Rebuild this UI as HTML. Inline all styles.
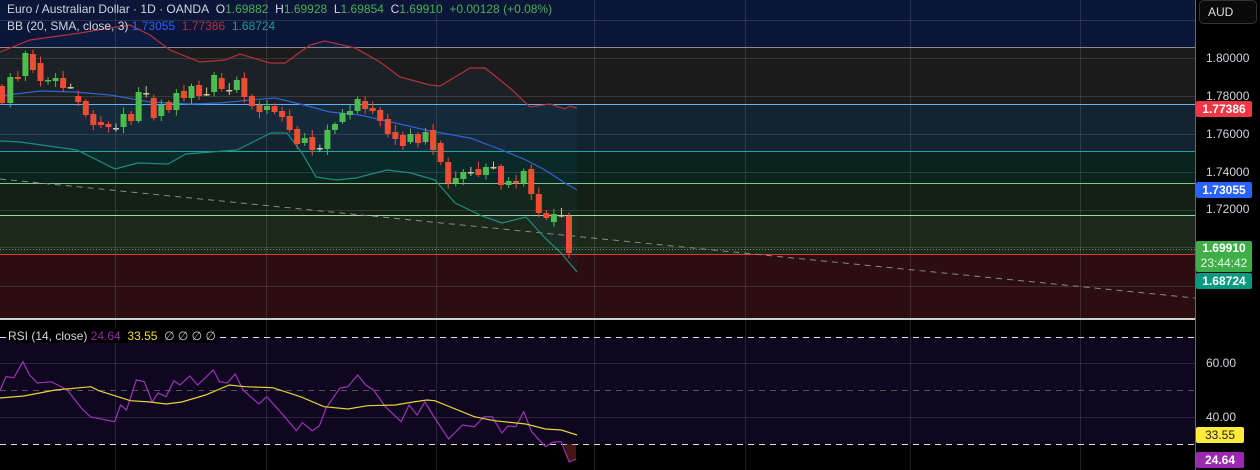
<!DOCTYPE html>
<html><head><meta charset="utf-8">
<style>
html,body{margin:0;padding:0;background:#000;width:1260px;height:470px;overflow:hidden;font-family:"Liberation Sans",sans-serif;}
#wrap{position:relative;width:1260px;height:470px;}
svg{position:absolute;left:0;top:0}
.t{position:absolute;font-size:12px;color:#d1d4dc;white-space:nowrap;line-height:14px}
.tag{position:absolute;left:1196px;width:56px;font-size:12px;font-weight:bold;color:#fff;text-align:center;border-radius:2px;line-height:16px}
.ax{position:absolute;left:1206px;font-size:12px;color:#d1d4dc;line-height:14px}
</style></head><body><div id="wrap">
<svg id="s" width="1260" height="470" xmlns="http://www.w3.org/2000/svg">
<rect x="0" y="0" width="1195" height="47" fill="#0b1638"/>
<rect x="0" y="47" width="1195" height="57" fill="#1b1b1b"/>
<rect x="0" y="104" width="1195" height="47" fill="#132330"/>
<rect x="0" y="151" width="1195" height="32" fill="#0b231f"/>
<rect x="0" y="183" width="1195" height="32" fill="#132114"/>
<rect x="0" y="215" width="1195" height="39" fill="#1b291b"/>
<rect x="0" y="254" width="1195" height="64" fill="#2c0e10"/>
<rect x="0" y="320" width="1195" height="150" fill="#000"/>
<rect x="0" y="337" width="1195" height="107" fill="#0f0620"/>
<g id="grid" stroke="rgba(255,255,255,0.12)" stroke-width="1"></g>
<line x1="0" y1="47.5" x2="1195" y2="47.5" stroke="#8a8a8a"/>
<line x1="0" y1="104.5" x2="1195" y2="104.5" stroke="#64b5f6"/>
<line x1="0" y1="151.5" x2="1195" y2="151.5" stroke="#26a69a"/>
<line x1="0" y1="183.5" x2="1195" y2="183.5" stroke="#81c784"/>
<line x1="0" y1="215.5" x2="1195" y2="215.5" stroke="#a5d6a7"/>
<line x1="0" y1="249.5" x2="1195" y2="249.5" stroke="#4caf50" stroke-dasharray="1 2"/>
<line x1="0" y1="254.5" x2="1195" y2="254.5" stroke="#e53935"/>
<line x1="0" y1="179" x2="1195" y2="298" stroke="#888" stroke-dasharray="6 5"/>
<rect x="0" y="318" width="1260" height="2" fill="#cfcfcf"/>
<line x1="0" y1="337.5" x2="1195" y2="337.5" stroke="#ddd" stroke-dasharray="6 5"/>
<line x1="0" y1="444.5" x2="1195" y2="444.5" stroke="#ddd" stroke-dasharray="6 5"/>
<line x1="0" y1="390.5" x2="1195" y2="390.5" stroke="#555" stroke-dasharray="6 5"/>
<g id="bb"></g>
<g id="cd"></g>
<g id="rsi"></g>
<rect x="1195" y="0" width="65" height="470" fill="#000"/>
<line x1="1195.5" y1="0" x2="1195.5" y2="470" stroke="#666"/>
<rect x="1199.5" y="0.5" width="57" height="23" rx="4" fill="#0a0a0a" stroke="#333"/>
</svg>
<div class="t" style="left:7px;top:2px">Euro / Australian Dollar · 1D · OANDA&nbsp; O<span style="color:#4caf50">1.69882</span>&nbsp; H<span style="color:#4caf50">1.69928</span>&nbsp; L<span style="color:#4caf50">1.69854</span>&nbsp; C<span style="color:#4caf50">1.69910</span>&nbsp; <span style="color:#4caf50">+0.00128 (+0.08%)</span></div>
<div class="t" style="left:7px;top:19px">BB (20, SMA, close, 3) <span style="color:#2962ff">1.73055</span>&nbsp; <span style="color:#b2323f">1.77386</span>&nbsp; <span style="color:#1f9c8c">1.68724</span></div>
<div class="t" style="left:7px;top:329px;background:#000;padding:0 1px">RSI (14, close) <span style="color:#9c27b0">24.64</span>&nbsp; <span style="color:#f5dd3a">33.55</span>&nbsp; <span style="color:#ccc">∅ ∅ ∅ ∅</span></div>
<div class="ax" style="left:1208px;top:5px;color:#ddd">AUD</div>
<div class="ax" style="top:51px">1.80000</div>
<div class="ax" style="top:89px">1.78000</div>
<div class="ax" style="top:127px">1.76000</div>
<div class="ax" style="top:165px">1.74000</div>
<div class="ax" style="top:202px">1.72000</div>
<div class="ax" style="top:356px">60.00</div>
<div class="ax" style="top:410px">40.00</div>
<div class="tag" style="top:101px;background:#f23645">1.77386</div>
<div class="tag" style="top:182px;background:#2962ff">1.73055</div>
<div class="tag" style="top:241px;background:#3fae48;line-height:15px;height:31px">1.69910<br><span style="font-weight:normal;color:#e8f5e9">23:44:42</span></div>
<div class="tag" style="top:273px;background:#089981">1.68724</div>
<div class="tag" style="top:427px;background:#ffeb3b;color:#222;width:48px;font-weight:normal">33.55</div>
<div class="tag" style="top:452px;background:#9c27b0;width:48px">24.64</div>
</div>
<script>
var NS="http://www.w3.org/2000/svg";
function el(p,t,a){var e=document.createElementNS(NS,t);for(var k in a)e.setAttribute(k,a[k]);document.getElementById(p).appendChild(e);return e;}
[115,266,436,594,745,910,1080].forEach(function(x){el("grid","line",{x1:x+.5,y1:0,x2:x+.5,y2:470});});
[20,58,96,134,172,210,247,286,363,417].forEach(function(y){el("grid","line",{x1:0,y1:y+.5,x2:1195,y2:y+.5});});
function pts(a){return a.map(function(p){return p[0]+","+p[1]}).join(" ");}
var up=[[0,52],[30,40],[80,33],[110,28],[130,25],[150,35],[170,50],[200,62],[225,60],[240,54],[270,63],[285,63],[310,45],[325,41],[355,48],[380,62],[400,77],[430,85],[440,86],[455,77],[470,68],[485,68],[510,88],[530,107],[550,104],[565,109],[570,106],[577,108]];
var mid=[[0,96],[40,91],[75,92],[110,95],[150,102],[190,104],[220,103],[250,100],[275,98],[300,104],[330,112],[360,115],[400,124],[430,131],[470,138],[502,150],[526,160],[545,170],[565,183],[577,190]];
var lo=[[0,141],[20,142],[77,150],[115,169],[138,163],[168,164],[186,154],[237,150],[271,133],[287,133],[302,153],[316,177],[336,180],[356,178],[387,170],[411,173],[435,180],[455,203],[482,216],[502,223],[526,217],[545,238],[561,253],[577,272]];
el("bb","polygon",{points:pts(up)+" "+pts(lo.slice().reverse()),fill:"rgba(33,150,243,0.05)"});
el("bb","polyline",{points:pts(up),fill:"none",stroke:"#b2323f","stroke-width":1.2});
el("bb","polyline",{points:pts(mid),fill:"none",stroke:"#2f63d6","stroke-width":1.2});
el("bb","polyline",{points:pts(lo),fill:"none",stroke:"#1c8c7e","stroke-width":1.2});
var c=[[86,103,'r'],[77,103,'g'],[77,79,'r'],[53,76,'g'],[54,70,'r'],[63,81,'r'],[80,81,'g'],[78,81,'g'],[78,88,'r'],[87,87,'n'],[96,102,'r'],[101,115,'r'],[114,125,'r'],[122,125,'r'],[124,127,'r'],[128,128,'n'],[114,127,'g'],[114,121,'r'],[92,121,'g'],[93,93,'n'],[98,118,'r'],[105,116,'g'],[102,110,'r'],[93,110,'g'],[91,98,'r'],[86,98,'g'],[85,96,'r'],[94,94,'n'],[75,92,'g'],[78,89,'r'],[90,90,'n'],[80,90,'g'],[78,97,'r'],[96,106,'r'],[105,112,'r'],[106,110,'g'],[106,112,'r'],[111,117,'r'],[116,130,'r'],[129,144,'r'],[138,143,'g'],[137,150,'r'],[148,148,'n'],[130,149,'g'],[124,130,'g'],[113,122,'g'],[111,115,'g'],[99,111,'g'],[101,109,'r'],[108,111,'r'],[110,121,'r'],[119,134,'r'],[132,139,'r'],[135,146,'r'],[134,142,'g'],[134,143,'r'],[132,142,'g'],[130,150,'r'],[143,162,'r'],[162,183,'r'],[178,183,'g'],[172,179,'g'],[172,172,'n'],[169,175,'r'],[167,175,'g'],[167,167,'n'],[166,185,'r'],[181,185,'g'],[181,183,'r'],[171,183,'g'],[169,194,'r'],[194,213,'r'],[213,218,'r'],[214,222,'g'],[215,215,'n'],[216,253,'r']];
c.forEach(function(d,i){
 var x=i==0?2:569-7.55*(75-i);var col=d[2]=='r'?'#ee4d34':(d[2]=='g'?'#4cbc4f':'#c8c8a0');
 var w=((i*37)%11)/2+2;
 el("cd","line",{x1:x,y1:d[0]-w,x2:x,y2:d[1]+((i*23)%9)/2+2,stroke:col,"stroke-width":1});
 el("cd","rect",{x:x-3,y:d[0],width:6,height:Math.max(1.5,d[1]-d[0]),fill:col});
});
var rp=[[0,390.7],[15,376.7],[35,377.7],[58,361.7],[75,375],[95,383],[130,381.7],[170,390],[210,410],[230,417],[290,421.7],[305,405],[320,410],[345,380],[365,381.7],[385,402],[400,393],[420,396.7],[440,380.7],[455,385],[480,376],[500,385],[540,370],[555,381.7],[575,383],[595,374],[615,390],[655,404],[675,396.7],[720,416.7],[750,430.7],[765,422.7],[790,430.7],[808,426],[825,408],[860,388],[880,386.7],[905,375],[925,385],[945,390],[975,406.7],[1015,421.7],[1035,405],[1055,415],[1075,402],[1100,418],[1135,439],[1170,425],[1200,426.7],[1225,416.7],[1245,416.7],[1270,433],[1285,426],[1305,426.7],[1325,411.7],[1345,431.7],[1380,446.7],[1400,442],[1420,441.7],[1440,462],[1458,459]].map(function(p){return [p[0]/2.53,p[1]]});
var yp=[[0,398],[60,396],[100,393],[140,390],[230,386.7],[250,390.7],[330,400.7],[380,402],[420,404],[460,402],[520,395],[580,385],[620,386.7],[690,387.7],[760,396.7],[820,406.7],[880,409],[930,405.7],[1000,405],[1045,402],[1080,400],[1100,400.7],[1200,416.7],[1250,420.7],[1330,424],[1380,429],[1420,430],[1460,435]].map(function(p){return [p[0]/2.53,p[1]]});
el("rsi","polygon",{points:"564,444 569,462 576,459 576,444",fill:"rgba(200,60,60,0.35)"});
el("rsi","polyline",{points:pts(rp),fill:"none",stroke:"#9c34b8","stroke-width":1.2});
el("rsi","polyline",{points:pts(yp),fill:"none",stroke:"#e6d33a","stroke-width":1.2});
</script>
</body></html>
